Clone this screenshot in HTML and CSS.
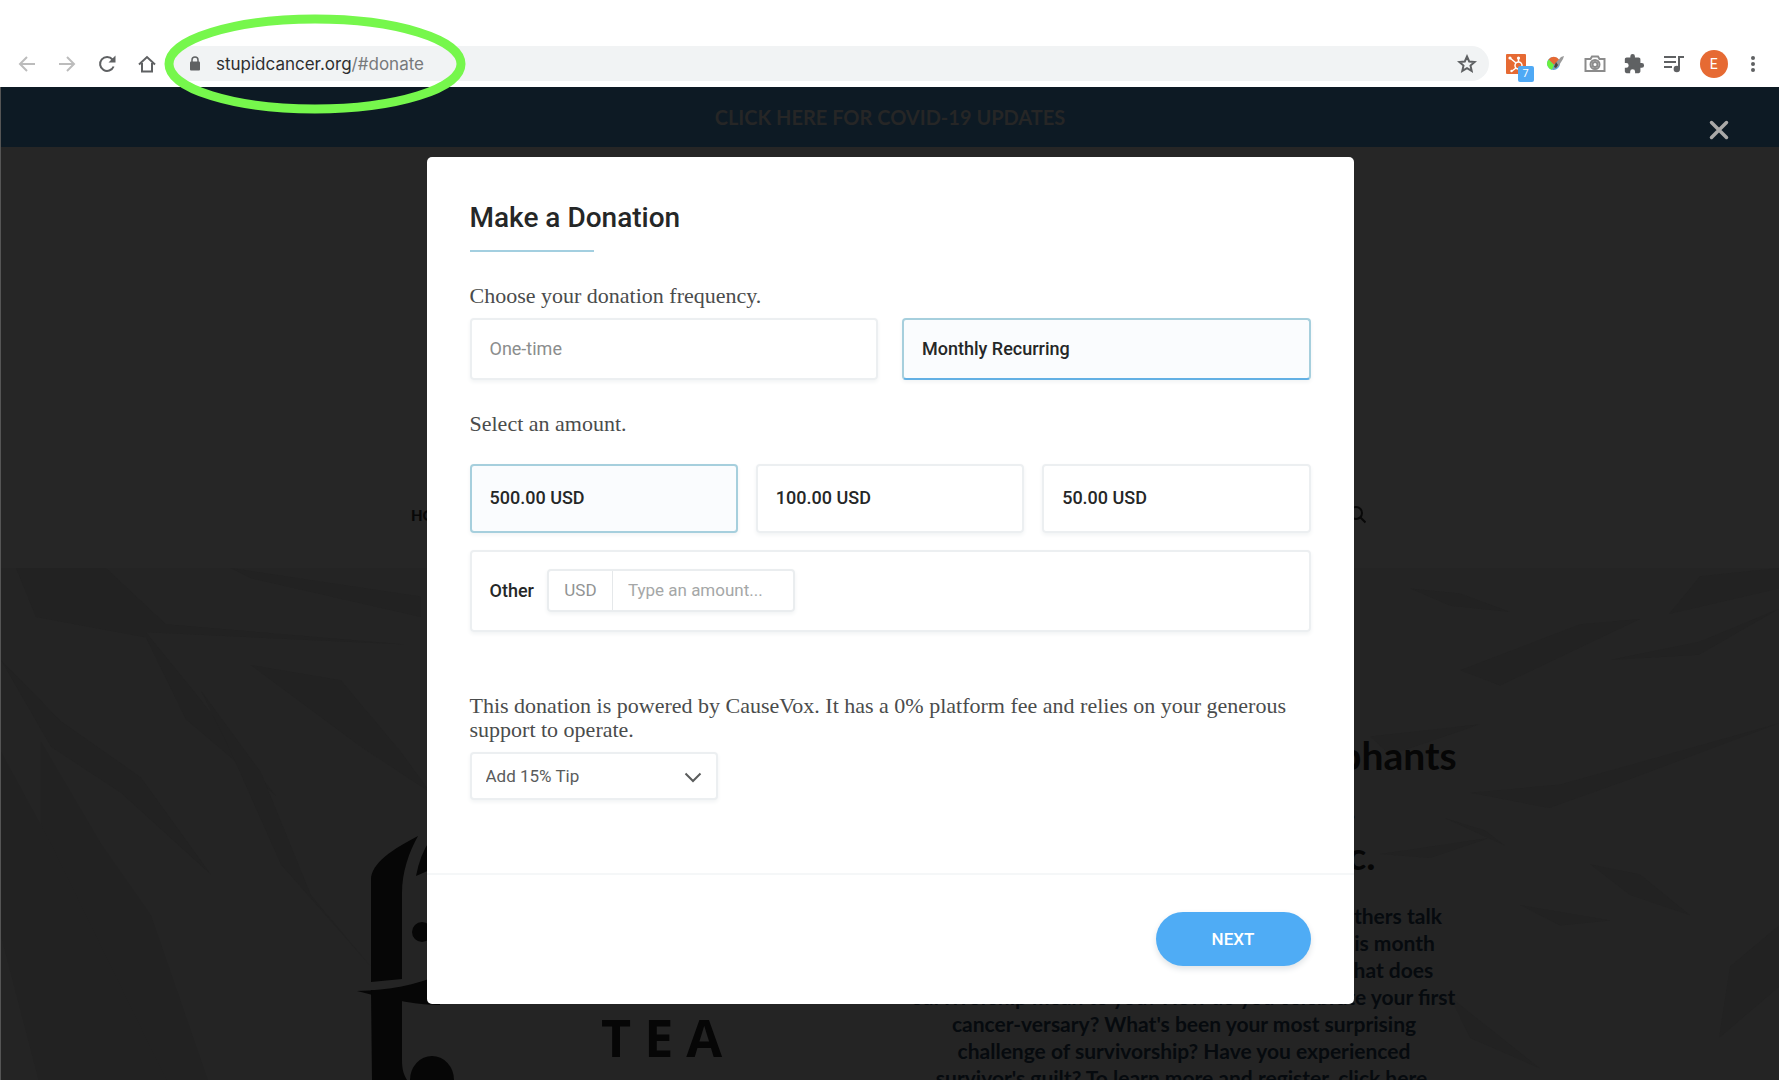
FILE: index.html
```html
<!DOCTYPE html>
<html lang="en">
<head>
<meta charset="utf-8">
<meta name="viewport" content="width=device-width, initial-scale=1">
<title>Make a Donation</title>
<link rel="stylesheet" href="styles.css">
</head>
<body>
<header class="toolbar">
  <nav class="toolbar-nav">
    <button class="tool faded" aria-label="Back"><svg width="18" height="18" viewBox="0 0 18 18"><path d="M17 9H2M9 2L2 9l7 7"/></svg></button>
    <button class="tool faded" aria-label="Forward"><svg width="18" height="18" viewBox="0 0 18 18"><path d="M1 9h15M9 2l7 7-7 7"/></svg></button>
    <button class="tool" aria-label="Reload"><svg width="18" height="18" viewBox="0 0 18 18"><path d="M15.600 11.500A7 7 0 1 1 14.500 4.500"/><path class="solid" d="M17.500 0.500v7h-7z"/></svg></button>
    <button class="tool" aria-label="Home"><svg width="18" height="18" viewBox="0 0 18 18"><path d="M1 9.500L9 2l8 7.500M4 8v8.500h10V8"/></svg></button>
  </nav>
  <div class="address">
    <svg width="12" height="16" viewBox="0 0 12 16"><path d="M3 7V4a3 3 0 0 1 6 0v3" fill="none" stroke="#5f6163" stroke-width="1.500"/><rect x="1" y="5.500" width="10" height="9" rx="1" fill="#5f6163"/></svg>
    <div class="url" role="textbox" aria-label="Address"><span class="host">stupidcancer.org</span>/#donate</div>
    <button class="star" aria-label="Bookmark"><svg width="20" height="20" viewBox="0 0 20 20"><path d="M10 2.500l2.200 5 5.400.5-4.100 3.600 1.200 5.300L10 14.100l-4.700 2.800 1.200-5.300L2.400 8l5.400-.5z"/></svg></button>
  </div>
  <div class="extensions">
    <button class="tool hub" aria-label="HubSpot"><svg width="20" height="20" viewBox="0 0 20 20"><rect width="20" height="20" rx="1" fill="#e66a33"/><g fill="none" stroke="#fff" stroke-width="1.500"><circle cx="12.500" cy="11.500" r="3.500"/><path d="M12.500 8V4M10 9L4 4M10 14l-4 3"/></g><circle cx="12.500" cy="4" r="1.600" fill="#fff"/><circle cx="4" cy="4" r="1.600" fill="#fff"/><circle cx="5.500" cy="17" r="1.200" fill="#fff"/></svg><span class="count">7</span></button>
    <button class="tool hub" aria-label="Color picker"><svg width="20" height="20" viewBox="0 0 20 20"><circle cx="8.500" cy="9.500" r="6.500" fill="#4fa8ee"/><path d="M9 11L3.500 5.500A6.500 6.500 0 0 1 14 5.500z" fill="#e66a33"/><path d="M9 11L3.500 5.500a6.500 6.500 0 0 0 3.500 10.300z" fill="#6bf23c"/><path d="M8 16l2-6 6-7 3-1-1 3-5 8z" fill="#9a9a9a"/><path d="M9 13l2-5 2 3-2 3z" fill="#444"/></svg></button>
    <button class="tool" aria-label="Screenshot"><svg class="camera" width="22" height="18" viewBox="0 0 22 18"><path d="M1.500 4h5l1.500-2.500h6L15.500 4h5v12h-19z"/><circle cx="11" cy="9.500" r="4.500"/><circle cx="11" cy="9.500" r="2.500"/></svg></button>
    <button class="tool" aria-label="Extensions"><svg width="22" height="22" viewBox="0 0 24 24"><path class="solid" d="M20.500 11H19V7c0-1.100-.9-2-2-2h-4V3.500a2.500 2.500 0 0 0-5 0V5H4c-1.100 0-2 .9-2 2v3.800h1.500a2.700 2.700 0 0 1 0 5.400H2V20c0 1.100.9 2 2 2h3.800v-1.500a2.700 2.700 0 0 1 5.400 0V22H17c1.100 0 2-.9 2-2v-4h1.500a2.500 2.500 0 0 0 0-5z"/></svg></button>
    <button class="tool" aria-label="Media"><svg width="22" height="18" viewBox="0 0 22 18"><g stroke="#5f6163" stroke-width="2" fill="none"><path d="M1 2h12M1 7h12M1 12h8M16 14V2h5"/></g><circle cx="13.800" cy="14" r="3.200" fill="#5f6163" stroke="none"/></svg></button>
    <button class="tool" aria-label="Profile"><span class="avatar">E</span></button>
    <button class="tool" aria-label="Menu"><svg width="6" height="18" viewBox="0 0 6 18"><circle class="solid" cx="3" cy="3" r="2"/><circle class="solid" cx="3" cy="9" r="2"/><circle class="solid" cx="3" cy="15" r="2"/></svg></button>
  </div>
  <svg class="highlight" width="302" height="102" viewBox="0 0 302 102"><ellipse cx="151" cy="51" rx="146" ry="45" fill="none" stroke="#76f74c" stroke-width="9"/></svg>
</header>

<main class="page">
  <a class="banner" href="#updates">CLICK HERE FOR COVID-19 UPDATES</a>
  <div class="site-header">
    <a class="site-link" href="#home">HOME</a>
    <svg width="20" height="20" viewBox="0 0 20 20"><g fill="none" stroke="#080808" stroke-width="2"><circle cx="10" cy="8" r="6"/><path d="M14.500 12.500l5 5"/></g></svg>
  </div>
  <section class="hero">
    <svg class="folds" viewBox="0 0 1779 512" preserveAspectRatio="none"><g fill="#222222">
      <path d="M15 0h90l60 55 240 20-260-12 50 60 80 100-90-75-40-80-110-20z"/>
      <path d="M0 90l60 60 80 55 70 95-90-80-70-45zM200 120l60 80 50 120 60 70-90-100-50-110z"/>
      <path d="M40 170l60 100 50 70 60 170h-60L90 370 40 250z"/><path d="M0 180l50 90 90 180 30 60H40L0 360z"/>
      <path d="M230 0l190 28v20L250 10zM250 95l90 15 60 70 30 40-70-45z"/>
      <path d="M1410 20l50 5 50 18-60-6zM1700 8l79-8v20l-110 25zM1460 100l120-45 60-5-140 65zM1610 90l90-18 79-32-80 45z"/>
      <path d="M1370 165l110-12-90 30zM1470 220l90-8 219-60-150 55-80 28zM1380 280l110-16-60 20zM1445 245l40 12 20 15z"/>
      <path d="M1590 290l50 10 50 40-60-20zM1730 390l49-40v60l-60 50zM1520 330l90 15-50 5zM1450 420l90 70-70-30z"/>
    </g></svg>
    <svg class="pot" width="100" height="245" viewBox="357 835 100 245"><g fill="#060606">
      <path d="M418 836C393 849 371 863 371 880V982L402 979V893C402 872 409 852 418 836z"/>
      <path d="M430 840Q420 855 416 876L432 869z"/><circle cx="422" cy="932" r="10"/>
      <path d="M357 991C390 990 415 985 440 975V1005C420 1005 395 1001 357 991z"/>
      <path d="M371 990h31v70c0 10 2 15 5 20h-35z"/><ellipse cx="432" cy="1080" rx="22" ry="24"/>
    </g></svg>
    <div class="brand"><span class="the">THE</span><div class="tea"><span>T</span><span>E</span><span>A</span></div></div>
    <div class="story">
      <h2>Cancer Survivors and Elephants<br>in a Room, with Tea.<br>A Stupid Cancer topic.</h2>
      <p>Join us as survivors, caregivers, families, and others talk<br>about life and living after cancer. Our topic this month<br>is on celebrating young adult survivorship. What does<br>survivorship mean to you? How do you celebrate your first<br>cancer-versary? What's been your most surprising<br>challenge of survivorship? Have you experienced<br>survivor's guilt? To learn more and register, click here.</p>
    </div>
  </section>

  <div class="overlay">
    <button class="close" aria-label="Close"><svg width="20" height="20" viewBox="0 0 20 20"><path d="M2.500 2.500l15 15M17.500 2.500l-15 15" stroke="#aaa9a8" stroke-width="3.500" stroke-linecap="round"/></svg></button>
    <form class="modal" role="dialog" aria-labelledby="title">
      <div class="modal-body">
        <h1 id="title">Make a Donation</h1>
        <fieldset>
          <legend>Choose your donation frequency.</legend>
          <div class="frequency">
            <label class="choice light"><input type="radio" name="frequency">One-time</label>
            <label class="choice blue"><input type="radio" name="frequency" checked>Monthly Recurring</label>
          </div>
        </fieldset>
        <fieldset>
          <legend>Select an amount.</legend>
          <div class="amounts">
            <label class="choice"><input type="radio" name="amount" checked>500.00 USD</label>
            <label class="choice"><input type="radio" name="amount">100.00 USD</label>
            <label class="choice"><input type="radio" name="amount">50.00 USD</label>
          </div>
          <div class="other">
            <label for="other">Other</label>
            <div class="money"><span>USD</span><input id="other" type="text" placeholder="Type an amount..."></div>
          </div>
        </fieldset>
        <label class="tip-text" for="tip">This donation is powered by CauseVox. It has a 0% platform fee and relies on your generous support to operate.</label>
        <div class="tip">
          <select id="tip"><option>Add 15% Tip</option></select>
          <svg width="18" height="12" viewBox="0 0 18 12"><path d="M1.500 1.500L9 9l7.500-7.500" fill="none" stroke="#5a5c5c" stroke-width="2"/></svg>
        </div>
      </div>
      <footer class="modal-footer"><button class="next" type="button">NEXT</button></footer>
    </form>
  </div>
</main>
</body>
</html>
```
FILE: styles.css
```css
* { box-sizing: border-box; }
body {
  margin: 0;
  min-height: 100vh;
  display: flex;
  flex-direction: column;
  font-family: Roboto, sans-serif;
  background: #242424;
}
button { border: 0; padding: 0; background: none; font: inherit; }

/* Browser toolbar */
.toolbar {
  position: relative;
  z-index: 2;
  display: flex;
  align-items: center;
  height: 87px;
  padding: 40px 6px 0 7px;
  background: #fff;
}
.toolbar-nav { display: flex; }
.tool {
  position: relative;
  display: flex;
  align-items: center;
  justify-content: center;
  width: 40px;
  height: 36px;
}
.tool svg { fill: none; stroke: #5f6163; stroke-width: 2; }
.tool .solid { fill: #5f6163; stroke: none; }
.tool .camera { stroke: #8b8b8b; }
.faded svg { stroke: #bcbcbc; }
.address {
  flex: 1;
  display: flex;
  align-items: center;
  height: 35px;
  padding: 0 12px 0 22px;
  border-radius: 18px;
  background: #f1f3f4;
}
.url {
  flex: 1;
  margin-left: 15px;
  font-family: Inter, sans-serif;
  font-size: 17px;
  color: #77797b;
}
.host { color: #2d2e30; }
.star { display: flex; }
.star svg { fill: none; stroke: #5f6163; stroke-width: 2; }
.extensions {
  display: grid;
  grid-template-columns: repeat(7, 1fr);
  width: 277px;
  margin-left: 7px;
}
.extensions .tool { width: auto; }
.extensions .hub svg { stroke: none; }
.count {
  position: absolute;
  right: 2px;
  bottom: 0;
  width: 16px;
  height: 16px;
  border-radius: 2px;
  background: #4fa9f5;
  color: #fff;
  font-size: 11px;
  line-height: 16px;
}
.avatar {
  width: 28px;
  height: 28px;
  border-radius: 50%;
  background: #e66a33;
  color: #fff;
  font-size: 14px;
  line-height: 28px;
}
.highlight { position: absolute; left: 164px; top: 13px; }

/* Site behind the dialog */
.page {
  position: relative;
  flex: 1;
  display: flex;
  flex-direction: column;
  height: 993px;
  overflow: hidden;
  border-left: 1px solid #555;
  font-family: Lato, sans-serif;
}
.banner {
  height: 60px;
  line-height: 60px;
  background: #0d1a24;
  color: #262626;
  text-align: center;
  text-decoration: none;
  font-size: 20px;
  font-weight: 700;
}
.site-header {
  display: flex;
  justify-content: space-between;
  align-items: center;
  height: 421px;
  padding: 314px 413px 0 410px;
  background: #262626;
}
.site-link { color: #080808; font-size: 15px; font-weight: 900; text-decoration: none; }
.hero {
  position: relative;
  flex: 1;
  display: grid;
  grid-template-columns: 356px 244px 282px 602px;
  background: #242424;
}
.folds { position: absolute; width: 100%; height: 100%; }
.pot { position: relative; grid-column: 2; margin-top: 267px; }
.brand {
  position: relative;
  padding-top: 413px;
  color: #060606;
  font-family: "Open Sans", sans-serif;
  font-weight: 700;
}
.the { display: block; padding-left: 24px; font-size: 24px; line-height: 26px; }
.tea { display: flex; gap: 13px; font-size: 52px; line-height: 60px; }
.story { position: relative; padding-top: 162px; text-align: center; color: #060606; }
.story h2 { margin: 0; font-size: 39px; line-height: 50px; font-weight: 700; white-space: nowrap; }
.story p { margin: 22px 0 0; font-size: 21px; line-height: 27px; font-weight: 700; color: #060a0e; white-space: nowrap; }

/* Dialog */
.overlay {
  position: absolute;
  inset: 0;
  display: flex;
  justify-content: center;
  align-items: flex-start;
  padding-top: 70px;
}
.close { position: absolute; top: 33px; right: 50px; display: flex; }
.modal {
  width: 100%;
  max-width: 927px;
  border-radius: 5px;
  background: #fff;
  color: #252727;
  font-family: Roboto, sans-serif;
}
.modal-body { padding: 41px 43px 73px; }
h1 {
  margin: 0 0 32px;
  padding-bottom: 14px;
  font-size: 28px;
  line-height: 40px;
  font-weight: 500;
  background: linear-gradient(#a3cfe0, #a3cfe0) left bottom / 124px 2px no-repeat;
}
fieldset { border: 0; margin: 0; padding: 0; }
legend, .tip-text {
  display: block;
  padding: 0;
  font-family: "Liberation Serif", serif;
  font-size: 22px;
  line-height: 24px;
  color: #4a4c4c;
}
.frequency { display: grid; grid-template-columns: 1fr 1fr; gap: 24px; padding: 10px 0 32px; }
.amounts { display: grid; grid-template-columns: repeat(3, 1fr); gap: 18px; padding: 28px 0 17px; }
.choice {
  position: relative;
  display: flex;
  align-items: center;
  height: 62px;
  padding: 0 18px 2px;
  border: 2px solid #eceff1;
  border-radius: 4px;
  box-shadow: 0 2px 4px #f1f3f4;
  font-size: 18px;
  font-weight: 500;
}
.amounts .choice { height: 69px; }
.choice input { position: absolute; inset: 0; margin: 0; appearance: none; }
.choice:has(:checked) { border-color: #a6cfdd; background: #fafcfe; }
.blue:has(:checked) { border-bottom-color: #62b0e4; }
.light { color: #8b8d8d; font-weight: 400; }
.other {
  display: flex;
  align-items: center;
  gap: 13px;
  height: 82px;
  padding: 0 18px 2px;
  border: 2px solid #eceff1;
  border-radius: 4px;
  box-shadow: 0 2px 4px #f1f3f4;
  font-size: 18px;
  font-weight: 500;
}
.money {
  display: flex;
  width: 248px;
  height: 43px;
  border: 2px solid #eaedef;
  border-radius: 4px;
  box-shadow: 0 2px 4px #f1f3f4;
  font-size: 17px;
  font-weight: 400;
  color: #919393;
}
.money span { width: 64px; line-height: 39px; text-align: center; border-right: 1px solid #e5e8ea; }
.money input { flex: 1; min-width: 0; padding: 0 0 0 15px; border: 0; background: none; font: inherit; }
.money input::placeholder { color: #a5a7a7; }
.tip-text { padding-top: 62px; }
.tip { position: relative; width: 248px; margin-top: 10px; }
.tip select {
  width: 100%;
  height: 48px;
  padding: 0 14px;
  border: 2px solid #eceff1;
  border-radius: 4px;
  box-shadow: 0 2px 4px #f1f3f4;
  background: #fff;
  appearance: none;
  font: 17px Roboto, sans-serif;
  color: #5a5c5c;
}
.tip svg { position: absolute; right: 16px; top: 20px; pointer-events: none; }
.modal-footer {
  display: flex;
  justify-content: flex-end;
  padding: 37px 43px 38px;
  border-top: 2px solid #f5f7f8;
}
.next {
  width: 155px;
  height: 54px;
  border-radius: 27px;
  background: #4facf5;
  box-shadow: 0 3px 6px #dfe3e6;
  color: #fff;
  font-size: 17px;
  font-weight: 500;
}
```
